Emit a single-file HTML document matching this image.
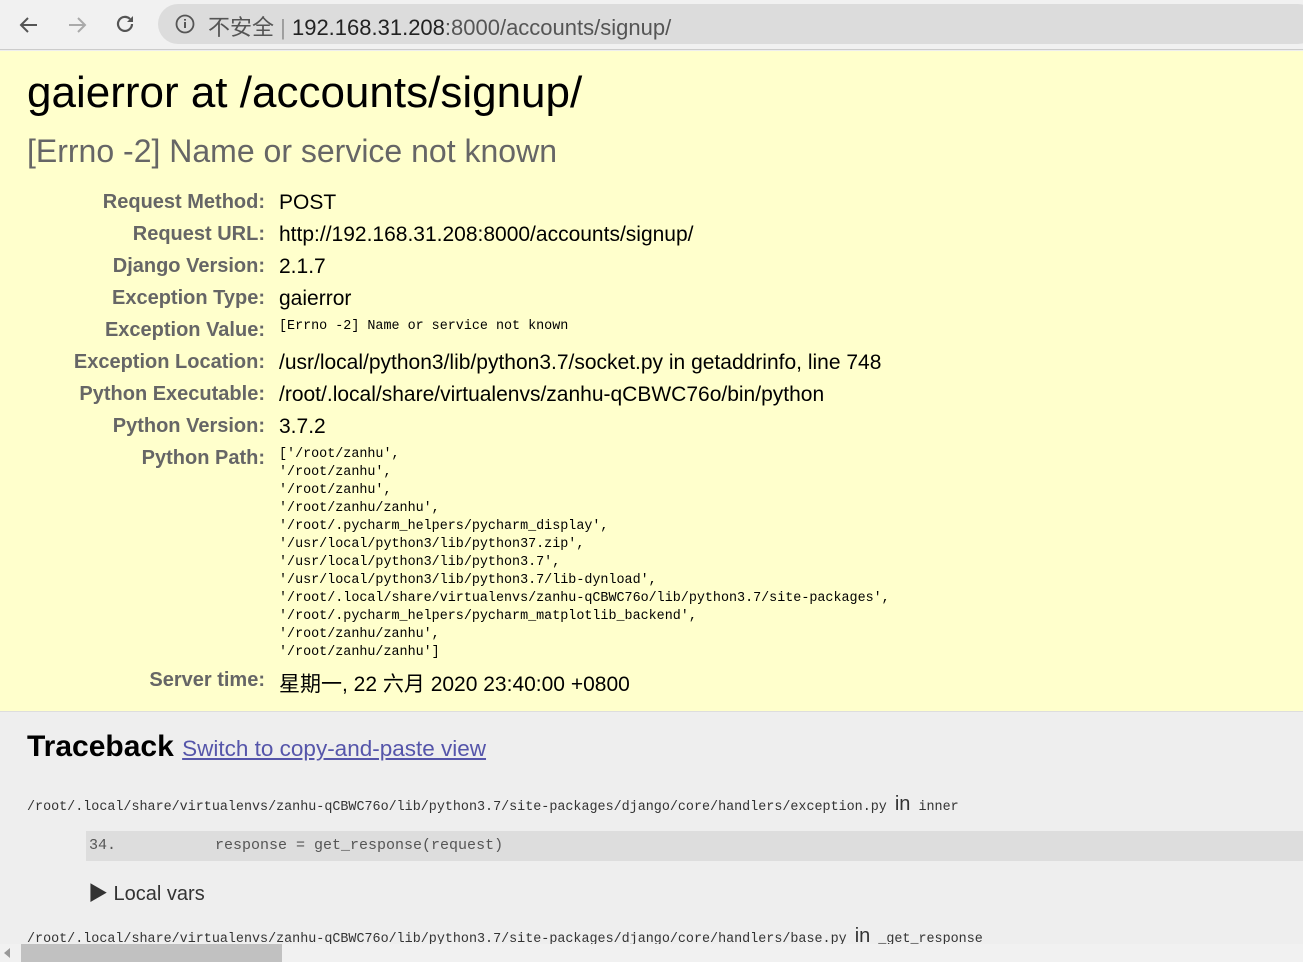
<!DOCTYPE html>
<html><head><meta charset="utf-8"><style>
*{margin:0;padding:0;box-sizing:border-box}
body{width:1303px;height:962px;overflow:hidden;font-family:"Liberation Sans","Noto Sans CJK SC",sans-serif;background:#eee;position:relative}
.bar{position:absolute;left:0;top:0;width:1303px;height:50px;background:#f1f1f1;border-bottom:1px solid #ccc}
.pill{position:absolute;left:158px;top:4px;width:1160px;height:40px;border-radius:20px;background:#dcdcdc}
.url{position:absolute;left:208px;top:10px;font-size:22px;color:#222;white-space:nowrap}
.url .g{color:#555}
.sum{position:absolute;left:0;top:51px;width:1303px;height:661px;background:#ffc;border-bottom:1px solid #ddd}
h1{position:absolute;left:27px;top:68px;font-size:44px;font-weight:normal;color:#000}
h2{position:absolute;left:27px;top:133px;font-size:32px;font-weight:normal;color:#666}
.lab{position:absolute;width:265px;text-align:right;left:0;color:#666;font-weight:bold;font-size:20px}
.val{position:absolute;left:279px;font-size:21px;color:#000;white-space:nowrap}
.mono{font-family:"Liberation Mono","Noto Sans CJK SC",monospace;font-size:13.4px;color:#000}
.pp div{height:18px;line-height:18px}
.tb{position:absolute;left:27px;top:730px;font-size:30px;font-weight:bold;color:#000}
.tb a{font-size:22.5px;font-weight:normal;color:#55a;text-decoration:underline}
.fn{position:absolute;left:27px;font-family:"Liberation Mono",monospace;font-size:13.4px;color:#333;white-space:nowrap}
.fn b{font-family:"Liberation Sans",sans-serif;font-weight:normal;font-size:20px}
.code{position:absolute;left:86px;top:831px;width:1217px;height:30px;background:#ddd;font-family:"Liberation Mono",monospace;font-size:15px;color:#555;line-height:30px;padding-left:3px;white-space:pre}
.lv{position:absolute;left:88px;top:877px;font-size:20px;color:#333}
.sb{position:absolute;left:0;top:944px;width:1303px;height:18px;background:#f1f1f1}
.th{position:absolute;left:21px;top:944px;width:261px;height:18px;background:#c1c1c1}
</style></head><body>
<div class="bar">
<svg style="position:absolute;left:17px;top:13px" width="24" height="24" viewBox="0 0 24 24"><path d="M20 12H5M11 5l-7 7 7 7" stroke="#555" stroke-width="2" fill="none"/></svg>
<svg style="position:absolute;left:65px;top:13px" width="24" height="24" viewBox="0 0 24 24"><path d="M4 12h15M13 5l7 7-7 7" stroke="#aaa" stroke-width="2" fill="none"/></svg>
<svg style="position:absolute;left:113px;top:12px" width="24" height="24" viewBox="0 0 24 24"><path d="M19 12a7 7 0 1 1-2-5" stroke="#555" stroke-width="2.2" fill="none"/><path d="M20 4v6h-6z" fill="#555"/></svg>
<div class="pill"></div>
<svg style="position:absolute;left:174px;top:13px" width="22" height="22" viewBox="0 0 22 22"><circle cx="11" cy="11" r="8.5" stroke="#555" stroke-width="1.8" fill="none"/><path d="M11 9v6M11 6v1.6" stroke="#555" stroke-width="2"/></svg>
<div class="url"><span class="g">不安全</span> <span style="color:#999">|</span> 192.168.31.208<span class="g">:8000/accounts/signup/</span></div>
</div>
<div class="sum"></div>
<h1>gaierror at /accounts/signup/</h1>
<h2>[Errno -2] Name or service not known</h2>
<div class="lab" style="top:191px">Request Method:</div><div class="val" style="top:191px">POST</div>
<div class="lab" style="top:223px">Request URL:</div><div class="val" style="top:223px">http://192.168.31.208:8000/accounts/signup/</div>
<div class="lab" style="top:255px">Django Version:</div><div class="val" style="top:255px">2.1.7</div>
<div class="lab" style="top:287px">Exception Type:</div><div class="val" style="top:287px">gaierror</div>
<div class="lab" style="top:319px">Exception Value:</div><div class="val mono" style="top:319px">[Errno -2] Name or service not known</div>
<div class="lab" style="top:351px">Exception Location:</div><div class="val" style="top:351px">/usr/local/python3/lib/python3.7/socket.py in getaddrinfo, line 748</div>
<div class="lab" style="top:383px">Python Executable:</div><div class="val" style="top:383px">/root/.local/share/virtualenvs/zanhu-qCBWC76o/bin/python</div>
<div class="lab" style="top:415px">Python Version:</div><div class="val" style="top:415px">3.7.2</div>
<div class="lab" style="top:447px">Python Path:</div>
<div class="val mono pp" style="top:446px">
<div>['/root/zanhu',</div><div> '/root/zanhu',</div><div> '/root/zanhu',</div><div> '/root/zanhu/zanhu',</div><div> '/root/.pycharm_helpers/pycharm_display',</div><div> '/usr/local/python3/lib/python37.zip',</div><div> '/usr/local/python3/lib/python3.7',</div><div> '/usr/local/python3/lib/python3.7/lib-dynload',</div><div> '/root/.local/share/virtualenvs/zanhu-qCBWC76o/lib/python3.7/site-packages',</div><div> '/root/.pycharm_helpers/pycharm_matplotlib_backend',</div><div> '/root/zanhu/zanhu',</div><div> '/root/zanhu/zanhu']</div>
</div>
<div class="lab" style="top:669px">Server time:</div><div class="val" style="top:668px">星期一, 22 六月 2020 23:40:00 +0800</div>
<div class="tb">Traceback <a>Switch to copy-and-paste view</a></div>
<div class="fn" style="top:793px">/root/.local/share/virtualenvs/zanhu-qCBWC76o/lib/python3.7/site-packages/django/core/handlers/exception.py <b>in</b> inner</div>
<div class="code">34.           response = get_response(request)</div>
<div class="lv">▶ Local vars</div>
<div class="fn" style="top:925px">/root/.local/share/virtualenvs/zanhu-qCBWC76o/lib/python3.7/site-packages/django/core/handlers/base.py <b>in</b> _get_response</div>
<div class="sb"></div><div class="th"></div>
<svg style="position:absolute;left:4px;top:948px" width="8" height="10"><path d="M6 0v10L0 5z" fill="#999"/></svg>
</body></html>
